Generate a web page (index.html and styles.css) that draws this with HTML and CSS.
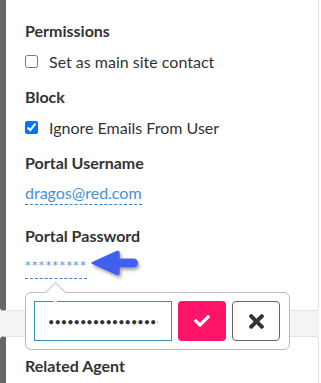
FILE: index.html
```html
<!DOCTYPE html>
<html lang="en">
<head>
    <meta charset="UTF-8">
    <meta name="viewport" content="width=device-width, initial-scale=1.0">
    <title>Contact - Settings</title>
    <link rel="stylesheet" href="styles.css">
</head>
<body>
    <div class="board">
        <!-- Contact settings -->
        <section class="card card-first">
            <div class="field">
                <h3>Permissions</h3>
                <label class="check"><input type="checkbox"> Set as main site contact</label>
            </div>
            <div class="field">
                <h3>Block</h3>
                <label class="check"><input type="checkbox" checked> Ignore Emails From User</label>
            </div>
            <div class="field field-username">
                <h3>Portal Username</h3>
                <a href="#" class="editable">dragos@red.com</a>
            </div>
            <div class="field field-password">
                <h3>Portal Password</h3>
                <div class="pw-row">
                    <a href="#" class="editable editable-pw">*********</a>
                    <svg class="pointer" width="54" height="32" viewBox="0 0 54 32">
                        <defs>
                            <filter id="shadow" x="-20%" y="-30%" width="150%" height="180%">
                                <feDropShadow dx="1.5" dy="2.5" stdDeviation="1.6" flood-color="#000" flood-opacity="0.35"/>
                            </filter>
                        </defs>
                        <g filter="url(#shadow)" fill="#4361f0">
                            <path d="M3 15 L28 3.5 Q30 3 30 5 L30 25 Q30 27 28 26.5 Z" stroke="#4361f0" stroke-width="1.5" stroke-linejoin="round"/>
                            <rect x="24" y="10.5" width="25" height="9" rx="4.5"/>
                        </g>
                    </svg>

                    <!-- Inline edit popover -->
                    <div class="popover">
                        <input type="password" class="pw-input" value="supersecret123456789">
                        <button class="icon-btn btn-ok" type="button">
                            <svg width="16" height="12" viewBox="0 64 512 384"><path fill="#fff" d="M173.898 439.404l-166.4-166.4c-9.997-9.997-9.997-26.206 0-36.204l36.203-36.204c9.997-9.998 26.207-9.998 36.204 0L192 312.69 432.095 72.596c9.997-9.997 26.207-9.997 36.204 0l36.203 36.204c9.997 9.997 9.997 26.206 0 36.204l-294.4 294.401c-9.998 9.997-26.207 9.997-36.204-.001z"/></svg>
                        </button>
                        <button class="icon-btn btn-cancel" type="button">
                            <svg width="15" height="15" viewBox="0 80 352 352"><path fill="#333" d="M242.72 256l100.07-100.07c12.28-12.28 12.28-32.19 0-44.48l-22.24-22.24c-12.28-12.28-32.19-12.28-44.48 0L176 189.28 75.93 89.21c-12.28-12.28-32.19-12.28-44.48 0L9.21 111.45c-12.28 12.28-12.28 32.19 0 44.48L109.28 256 9.21 356.07c-12.28 12.28-12.28 32.19 0 44.48l22.24 22.24c12.28 12.28 32.2 12.28 44.48 0L176 322.72l100.07 100.07c12.28 12.28 32.2 12.28 44.48 0l22.24-22.24c12.28-12.28 12.28-32.19 0-44.48L242.72 256z"/></svg>
                        </button>
                    </div>
                </div>
            </div>
        </section>

        <section class="card">
            <h3>Related Agent</h3>
        </section>
    </div>
</body>
</html>
```

FILE: styles.css
```css
* {
    margin: 0;
    padding: 0;
    box-sizing: border-box;
}

body {
    font-family: Lato, 'Noto Sans', sans-serif;
    color: #333;
    background: #fff;
    overflow: hidden;
}

.board {
    width: 319px;
    background: #f4f4f4;
    display: flex;
    flex-direction: column;
    gap: 25px;
}

.card {
    background: #fff;
    border: 1px solid #e4e4e4;
    border-left: 6px solid #666;
    border-radius: 4px;
    padding: 19px 16px 40px 19px;
}

.card-first {
    border-top: none;
    border-top-left-radius: 0;
    border-top-right-radius: 0;
    padding-top: 21px;
    padding-bottom: 30px;
}

h3 {
    font-size: 16px;
    line-height: 20px;
    font-weight: 700;
    color: #333;
}

.field {
    margin-bottom: 14px;
}

.field-username {
    margin-bottom: 21px;
}

.field-password {
    margin-bottom: 0;
}

.check {
    display: flex;
    align-items: center;
    gap: 11px;
    margin-top: 8px;
    height: 24px;
    font-size: 16px;
}

.check input {
    width: 13px;
    height: 13px;
    margin: 0;
}

.editable {
    display: inline-block;
    margin-top: 9px;
    font-size: 16px;
    line-height: 22px;
    color: #4a8fd6;
    text-decoration: none;
    border-bottom: 1px dashed #3a7fc8;
}

.pw-row {
    position: relative;
    display: flex;
    align-items: flex-start;
    margin-top: 8px;
}

.editable-pw {
    margin-top: 0;
    padding-top: 2px;
    padding-bottom: 2px;
    font-family: 'DejaVu Sans', sans-serif;
    font-size: 11px;
    line-height: 20px;
    letter-spacing: 1.4px;
    color: #5b8fd2;
}

.pointer {
    margin-left: 2px;
    margin-top: -6px;
}

.popover {
    position: absolute;
    top: 38px;
    left: 0;
    width: 265px;
    display: flex;
    gap: 6px;
    padding: 8px;
    background: #fff;
    border: 1px solid #bdbdbd;
    border-radius: 6px;
    z-index: 10;
}

.popover::before {
    content: '';
    position: absolute;
    top: -8px;
    left: 22px;
    width: 14px;
    height: 14px;
    background: #fff;
    border-top: 1px solid #bdbdbd;
    border-left: 1px solid #bdbdbd;
    transform: rotate(45deg);
}

.pw-input {
    width: 138px;
    height: 40px;
    border: 1px solid #3a8dc4;
    border-radius: 0;
    padding: 0 13px;
    font-family: Lato, sans-serif;
    font-size: 11px;
    letter-spacing: 0;
    color: #333;
    outline: none;
}

.icon-btn {
    width: 48px;
    height: 40px;
    border-radius: 4px;
    display: flex;
    align-items: center;
    justify-content: center;
    cursor: pointer;
}

.btn-ok {
    background: #ff1469;
    border: none;
}

.btn-cancel {
    background: #fff;
    border: 1px solid #666;
}
```
